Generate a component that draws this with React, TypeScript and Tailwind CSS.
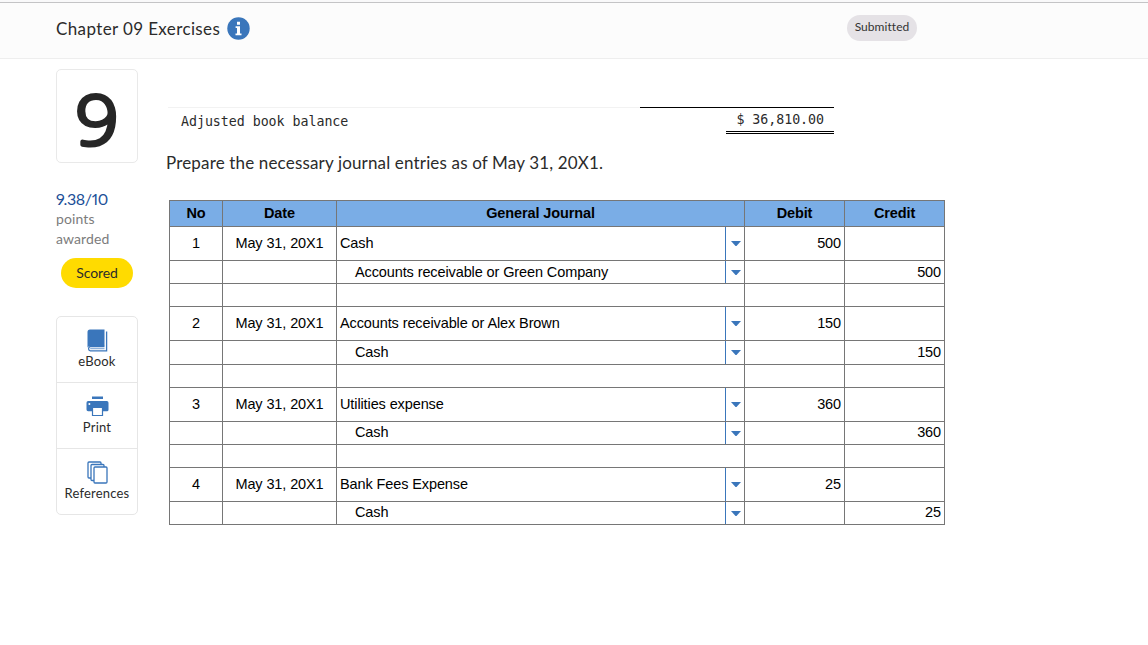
type JournalRow = {
  no?: string;
  date?: string;
  account?: string;
  indent?: boolean;
  lift?: boolean;
  debit?: string;
  credit?: string;
  height: string;
};

const rows: JournalRow[] = [
  { no: "1", date: "May 31, 20X1", account: "Cash", debit: "500", height: "h-[34px]" },
  { account: "Accounts receivable or Green Company", indent: true, credit: "500", height: "h-[23px]" },
  { height: "h-[23px]" },
  { no: "2", date: "May 31, 20X1", account: "Accounts receivable or Alex Brown", debit: "150", height: "h-[34px]" },
  { account: "Cash", indent: true, credit: "150", height: "h-[24px]" },
  { height: "h-[23px]" },
  { no: "3", date: "May 31, 20X1", account: "Utilities expense", debit: "360", height: "h-[34px]" },
  { account: "Cash", indent: true, lift: true, credit: "360", height: "h-[23px]" },
  { height: "h-[23px]" },
  { no: "4", date: "May 31, 20X1", account: "Bank Fees Expense", debit: "25", height: "h-[34px]" },
  { account: "Cash", indent: true, lift: true, credit: "25", height: "h-[23px]" },
];

const GRID = "grid grid-cols-[53px_114px_408px_100px_100px]";
const CELL = "flex items-center border-r border-b border-[#767676]";

function Header() {
  return (
    <header className="h-[59px] border-b border-[#eeeeee] bg-[#fcfcfc]">
      <div className="h-[3px] border-b border-[#c4c4c6] bg-[#f9f9fa]" />
      <div className="flex h-[52px] items-center pl-14">
        <h1 className="w-[171px] whitespace-nowrap text-[17px] tracking-[0.38px] text-[#2b2b2b]">Chapter 09 Exercises</h1>
        <svg className="mb-[2px] size-[23px]" viewBox="0 0 23 23">
          <circle cx="11.5" cy="11.5" r="11.2" fill="#3a76bb" />
          <path d="M10 4.8h3v3h-3zM8.6 9.3H13v7.1h1.5v1.8h-6v-1.8H10v-5.3H8.6z" fill="#fff" />
        </svg>
        <span className="mb-[3px] ml-[597px] flex h-[26px] w-[70px] items-center justify-center rounded-full bg-[#e5e2e6] pb-[2px] text-[12px] tracking-[0.05px] text-[#333]">
          Submitted
        </span>
      </div>
    </header>
  );
}

function BookIcon() {
  return (
    <svg className="h-[23px] w-[21px]" viewBox="0 0 21 23">
      <path d="M3 .5h14.500v16.500H3.200A3 3 0 0 0 .5 18.600V3A2.500 2.500 0 0 1 3 .5z" fill="#3a76bb" />
      <path d="M17.500 17.500H3.300a2.200 2.200 0 0 0 0 4.300h16.300V2.500" fill="none" stroke="#3a76bb" strokeWidth="1.300" />
      <path d="M3.200 19.700H17.500" stroke="#3a76bb" strokeWidth=".7" />
    </svg>
  );
}

function PrintIcon() {
  return (
    <svg className="h-[21px] w-[23px]" viewBox="0 0 23 21">
      <path d="M6 .5h11v2.500h-11z" fill="#3a76bb" />
      <path d="M2.200 5h18.600a1.700 1.700 0 0 1 1.700 1.700v7a1.500 1.500 0 0 1-1.500 1.500H2.100a1.600 1.600 0 0 1-1.600-1.600V6.700A1.700 1.700 0 0 1 2.200 5z" fill="#3a76bb" />
      <circle cx="3.400" cy="8" r="1" fill="#fff" />
      <path d="M6.500 11.500h10v8h-10z" fill="#fff" stroke="#3a76bb" strokeWidth="1.200" />
    </svg>
  );
}

function ReferencesIcon() {
  return (
    <svg className="h-[23px] w-[21px]" viewBox="0 0 21 23" fill="#fff" stroke="#3a76bb" strokeWidth="1.3">
      <rect x="1" y="1" width="13" height="16" rx="1" />
      <rect x="4" y="3.500" width="13" height="16" rx="1" />
      <rect x="7" y="6" width="13" height="16" rx="1" />
    </svg>
  );
}

function Sidebar() {
  return (
    <aside className="w-[82px] pt-[10px]">
      <div className="h-[94px] rounded-[5px] border border-[#e9e9e9]">
        <svg className="h-[104px] w-[80px] overflow-visible" viewBox="0 0 80 104">
          <text
            x="35.7"
            y="75.5"
            transform="scale(1.12 1)"
            textAnchor="middle"
            fontSize="68"
            fontFamily="'Open Sans', sans-serif"
            fontWeight="300"
            fill="#262626"
            stroke="#262626"
            strokeWidth="4"
            strokeLinejoin="round"
          >
            9
          </text>
        </svg>
      </div>
      <div className="mt-[25px] text-[16px] leading-[21px] tracking-[-0.35px] text-[#1c5098] proportional-nums">9.38/10</div>
      <div className="text-[14px] leading-[20px] tracking-[0.1px] text-[#7c7c7c]">
        points
        <br />
        awarded
      </div>
      <div className="mt-[9px] ml-[5px] flex h-[30px] w-[72px] items-center justify-center rounded-full bg-[#ffdb00] pb-[1px] text-[14px] tracking-[-0.1px] text-[#2b2b2b]">
        Scored
      </div>
      <nav className="mt-[28px] divide-y divide-[#e6e6e6] rounded-[5px] border border-[#e6e6e6] text-[13px] tracking-[0.2px] text-[#2b2b2b]">
        <a className="flex h-[66px] flex-col items-center pt-[12px]">
          <BookIcon />
          <span className="-mt-[1px] leading-[20px]">eBook</span>
        </a>
        <a className="flex h-[66px] flex-col items-center pt-[13px]">
          <PrintIcon />
          <span className="leading-[20px]">Print</span>
        </a>
        <a className="flex h-[65px] flex-col items-center pt-[12px]">
          <ReferencesIcon />
          <span className="-mt-[1px] leading-[20px]">References</span>
        </a>
      </nav>
    </aside>
  );
}

function BalanceLine() {
  return (
    <div className="ml-[2px] flex h-[27px] w-[666px] justify-between font-['DejaVu_Sans_Mono','Liberation_Mono',monospace] text-[13.3px] tracking-[-0.04px] text-[#2b2b2b]">
      <div className="flex-1 border-t border-[#f2f2f2] pt-[4px] pl-[13px] leading-[20px]">Adjusted book balance</div>
      <div className="flex w-[194px] justify-end border-t border-black">
        <div className="h-[26px] w-[108px] border-b-3 border-double border-black pt-[2px] pr-[10px] text-right leading-[20px]">
          $ 36,810.00
        </div>
      </div>
    </div>
  );
}

function AccountCell({ account, indent, lift }: JournalRow) {
  if (!account) return <div className={CELL} />;
  return (
    <div className={CELL}>
      <span className={`flex-1 ${indent ? "pl-[18px]" : "pl-[3px]"} ${lift ? "pb-[2px]" : ""}`}>{account}</span>
      <span className="flex w-[19px] items-center self-stretch border-l border-[#3a76bb] pl-[5px]">
        <svg className="h-[5px] w-[10px]" viewBox="0 0 10 5">
          <path d="M0 0h10L5.500 5h-1z" fill="#3a76bb" />
        </svg>
      </span>
    </div>
  );
}

function Journal() {
  return (
    <div className="ml-[3px] w-[776px] border-t border-l border-[#767676] font-['Liberation_Sans',Arial,sans-serif] text-[14.5px] leading-[17px] tracking-[-0.11px] text-black">
      <div className={`${GRID} h-[26px] bg-[#7aade6] font-bold`}>
        {["No", "Date", "General Journal", "Debit", "Credit"].map((label) => (
          <div key={label} className={`${CELL} justify-center`}>{label}</div>
        ))}
      </div>
      {rows.map((row, i) => (
        <div key={i} className={`${GRID} ${row.height}`}>
          <div className={`${CELL} justify-center`}>{row.no}</div>
          <div className={`${CELL} justify-center`}>{row.date}</div>
          <AccountCell {...row} />
          <div className={`${CELL} justify-end pr-[3px]`}>{row.debit}</div>
          <div className={`${CELL} justify-end pr-[3px] ${row.lift ? "pb-[2px]" : ""}`}>{row.credit}</div>
        </div>
      ))}
    </div>
  );
}

export default function App() {
  return (
    <div className="h-[645px] overflow-hidden bg-white font-[Lato,sans-serif]">
      <Header />
      <div className="flex pl-14">
        <Sidebar />
        <main className="ml-[28px] pt-[48px]">
          <BalanceLine />
          <p className="mt-[18px] h-[48px] text-[17px] leading-[22px] tracking-[0.16px] text-[#2b2b2b]">
            Prepare the necessary journal entries as of May 31, 20X1.
          </p>
          <Journal />
        </main>
      </div>
    </div>
  );
}
